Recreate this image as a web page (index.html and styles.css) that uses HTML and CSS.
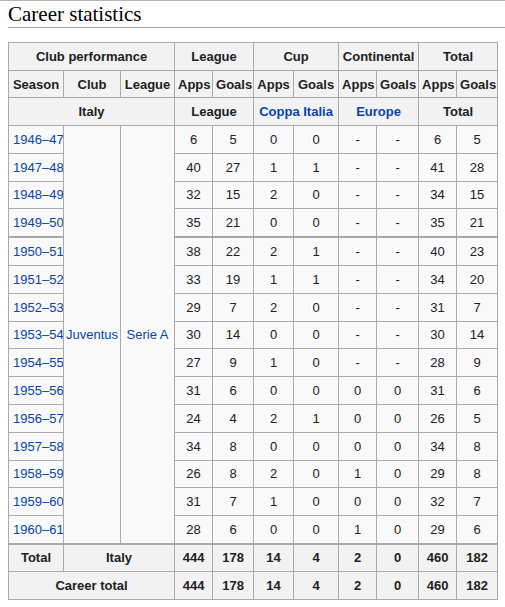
FILE: index.html
```html
<!DOCTYPE html>
<html>
<head>
<meta charset="utf-8">
<link rel="stylesheet" href="styles.css">
</head>
<body>
<h2 class="heading">Career statistics</h2>
<table class="stats">
  <colgroup>
    <col class="c-season"><col class="c-club"><col class="c-league">
    <col class="c1"><col class="c2"><col class="c3"><col class="c4">
    <col class="c5"><col class="c6"><col class="c7"><col class="c8">
  </colgroup>
  <tr class="hrow">
    <th colspan="3">Club performance</th>
    <th colspan="2">League</th>
    <th colspan="2">Cup</th>
    <th colspan="2">Continental</th>
    <th colspan="2">Total</th>
  </tr>
  <tr class="hrow short">
    <th>Season</th><th>Club</th><th>League</th>
    <th>Apps</th><th>Goals</th><th>Apps</th><th>Goals</th>
    <th>Apps</th><th>Goals</th><th>Apps</th><th>Goals</th>
  </tr>
  <tr class="hrow">
    <th colspan="3">Italy</th>
    <th colspan="2">League</th>
    <th colspan="2"><a href="#">Coppa Italia</a></th>
    <th colspan="2"><a href="#">Europe</a></th>
    <th colspan="2">Total</th>
  </tr>
  <tr><td class="season"><a href="#">1946–47</a></td>
    <td rowspan="15" class="name"><a href="#">Juventus</a></td>
    <td rowspan="15" class="name"><a href="#">Serie A</a></td>
    <td>6</td><td>5</td><td>0</td><td>0</td><td>-</td><td>-</td><td>6</td><td>5</td></tr>
  <tr><td class="season"><a href="#">1947–48</a></td><td>40</td><td>27</td><td>1</td><td>1</td><td>-</td><td>-</td><td>41</td><td>28</td></tr>
  <tr><td class="season"><a href="#">1948–49</a></td><td>32</td><td>15</td><td>2</td><td>0</td><td>-</td><td>-</td><td>34</td><td>15</td></tr>
  <tr><td class="season"><a href="#">1949–50</a></td><td>35</td><td>21</td><td>0</td><td>0</td><td>-</td><td>-</td><td>35</td><td>21</td></tr>
  <tr class="sep"><td class="season"><a href="#">1950–51</a></td><td>38</td><td>22</td><td>2</td><td>1</td><td>-</td><td>-</td><td>40</td><td>23</td></tr>
  <tr><td class="season"><a href="#">1951–52</a></td><td>33</td><td>19</td><td>1</td><td>1</td><td>-</td><td>-</td><td>34</td><td>20</td></tr>
  <tr><td class="season"><a href="#">1952–53</a></td><td>29</td><td>7</td><td>2</td><td>0</td><td>-</td><td>-</td><td>31</td><td>7</td></tr>
  <tr><td class="season"><a href="#">1953–54</a></td><td>30</td><td>14</td><td>0</td><td>0</td><td>-</td><td>-</td><td>30</td><td>14</td></tr>
  <tr><td class="season"><a href="#">1954–55</a></td><td>27</td><td>9</td><td>1</td><td>0</td><td>-</td><td>-</td><td>28</td><td>9</td></tr>
  <tr><td class="season"><a href="#">1955–56</a></td><td>31</td><td>6</td><td>0</td><td>0</td><td>0</td><td>0</td><td>31</td><td>6</td></tr>
  <tr><td class="season"><a href="#">1956–57</a></td><td>24</td><td>4</td><td>2</td><td>1</td><td>0</td><td>0</td><td>26</td><td>5</td></tr>
  <tr><td class="season"><a href="#">1957–58</a></td><td>34</td><td>8</td><td>0</td><td>0</td><td>0</td><td>0</td><td>34</td><td>8</td></tr>
  <tr><td class="season"><a href="#">1958–59</a></td><td>26</td><td>8</td><td>2</td><td>0</td><td>1</td><td>0</td><td>29</td><td>8</td></tr>
  <tr><td class="season"><a href="#">1959–60</a></td><td>31</td><td>7</td><td>1</td><td>0</td><td>0</td><td>0</td><td>32</td><td>7</td></tr>
  <tr><td class="season"><a href="#">1960–61</a></td><td>28</td><td>6</td><td>0</td><td>0</td><td>1</td><td>0</td><td>29</td><td>6</td></tr>
  <tr class="sep totals short">
    <th>Total</th><th colspan="2">Italy</th>
    <th>444</th><th>178</th><th>14</th><th>4</th><th>2</th><th>0</th><th>460</th><th>182</th>
  </tr>
  <tr class="totals">
    <th colspan="3">Career total</th>
    <th>444</th><th>178</th><th>14</th><th>4</th><th>2</th><th>0</th><th>460</th><th>182</th>
  </tr>
</table>
</body>
</html>
```

FILE: styles.css
```css
html, body {
  margin: 0;
  background: #ffffff;
}
body {
  padding: 0 0 0 8px;
  border-top: 1px solid #b4b8bd;
  color: #202122;
}
.heading {
  margin: 0;
  font-family: "Liberation Serif", "DejaVu Serif", serif;
  font-weight: normal;
  font-size: 21px;
  line-height: 26px;
  color: #000;
  border-bottom: 1px solid #a2a9b1;
}
.stats {
  margin-top: 14px;
  border-collapse: collapse;
  table-layout: fixed;
  width: 490px;
  background: #f9f9f9;
  font-family: "Liberation Sans", Arial, sans-serif;
  font-size: 13px;
  color: #202122;
}
.c-season { width: 55px; }
.c-club { width: 57px; }
.c-league { width: 54px; }
.c1 { width: 38px; }
.c2 { width: 41px; }
.c3 { width: 40px; }
.c4 { width: 45px; }
.c5 { width: 38px; }
.c6 { width: 42px; }
.c7 { width: 38px; }
.c8 { width: 41px; }
.stats th, .stats td {
  border: 1px solid #aaaaaa;
  padding: 0 3px;
  height: 26.8px;
  text-align: center;
  vertical-align: middle;
  white-space: nowrap;
  overflow: hidden;
}
.stats .hrow th, .stats .totals th {
  height: 27px;
}
.stats .short th {
  height: 26px;
}
.stats th {
  background: #f2f2f2;
  font-weight: bold;
}
.stats td.season {
  text-align: left;
  padding-left: 4px;
}
.stats td.name {
  padding: 0 2px;
}
.stats a {
  color: #0645ad;
  text-decoration: none;
}
.stats .sep td, .stats .sep th {
  border-top: 2px solid #a8a8a8;
}
```
